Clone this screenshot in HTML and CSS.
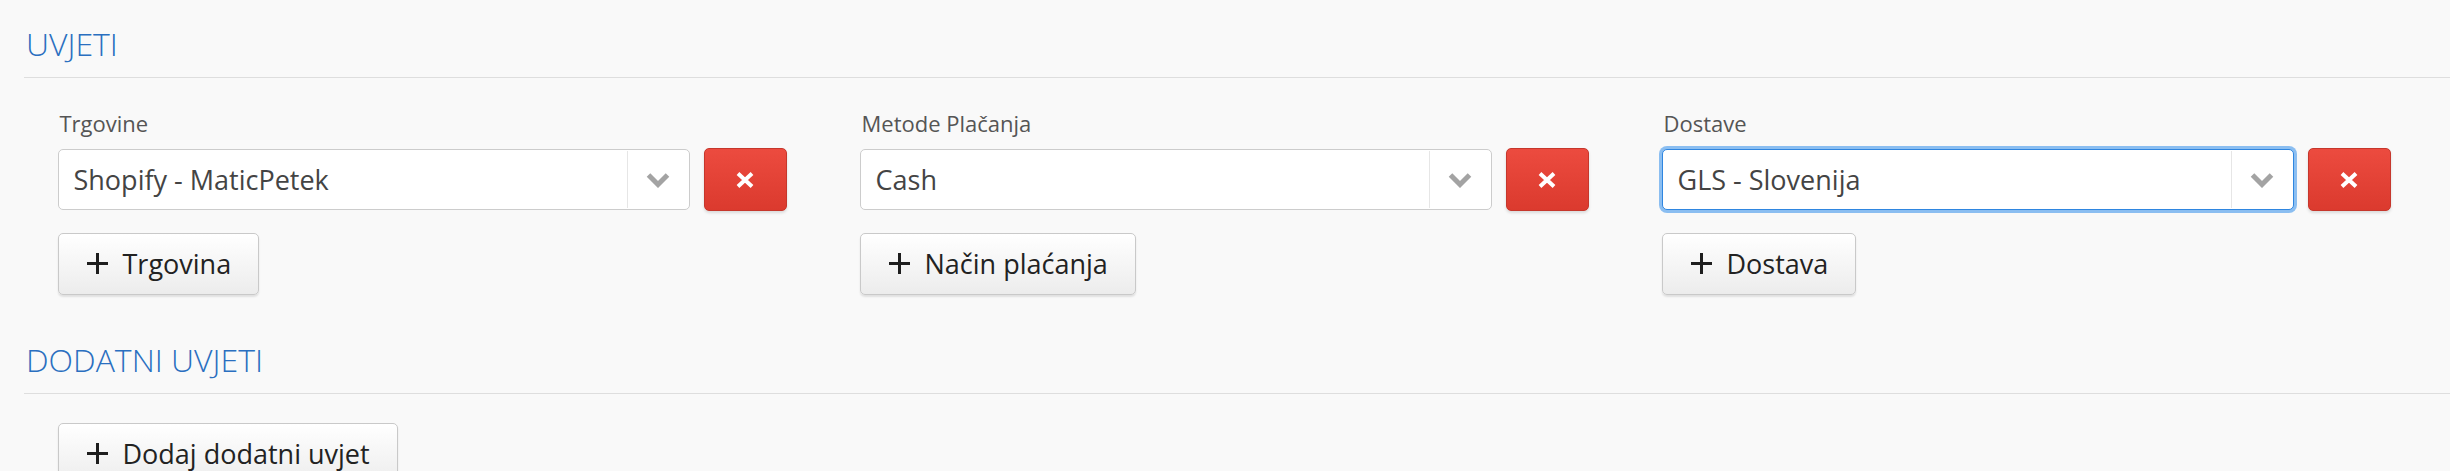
FILE: index.html
```html
<!DOCTYPE html>
<html lang="sl">
<head>
<meta charset="utf-8">
<title>Uvjeti</title>
<link rel="stylesheet" href="styles.css">
</head>
<body>
<div class="page">
  <h2 class="section-title">UVJETI</h2>
  <div class="conditions">
    <div class="field">
      <label class="field-label">Trgovine</label>
      <div class="select-row">
        <div class="select">
          <span class="select-value">Shopify - MaticPetek</span>
          <span class="select-arrow"><svg width="24" height="16" viewBox="0 0 24 16"><polyline points="2.5,3 12,12.5 21.5,3" fill="none" stroke="#a3a3a3" stroke-width="5"/></svg></span>
        </div>
        <button class="btn-remove" type="button"><svg width="20" height="16" viewBox="0 0 20 16"><path d="M3 1.5 L17 14.5 M17 1.5 L3 14.5" stroke="#fff" stroke-width="4"/></svg></button>
      </div>
      <button class="btn-add" type="button"><svg class="plus" width="21" height="21" viewBox="0 0 21 21"><path d="M10.5 0 V21 M0 10.5 H21" stroke="#1e1e1e" stroke-width="3"/></svg><span>Trgovina</span></button>
    </div>
    <div class="field">
      <label class="field-label">Metode Plačanja</label>
      <div class="select-row">
        <div class="select">
          <span class="select-value">Cash</span>
          <span class="select-arrow"><svg width="24" height="16" viewBox="0 0 24 16"><polyline points="2.5,3 12,12.5 21.5,3" fill="none" stroke="#a3a3a3" stroke-width="5"/></svg></span>
        </div>
        <button class="btn-remove" type="button"><svg width="20" height="16" viewBox="0 0 20 16"><path d="M3 1.5 L17 14.5 M17 1.5 L3 14.5" stroke="#fff" stroke-width="4"/></svg></button>
      </div>
      <button class="btn-add" type="button"><svg class="plus" width="21" height="21" viewBox="0 0 21 21"><path d="M10.5 0 V21 M0 10.5 H21" stroke="#1e1e1e" stroke-width="3"/></svg><span>Način plaćanja</span></button>
    </div>
    <div class="field">
      <label class="field-label">Dostave</label>
      <div class="select-row">
        <div class="select is-focused">
          <span class="select-value">GLS - Slovenija</span>
          <span class="select-arrow"><svg width="24" height="16" viewBox="0 0 24 16"><polyline points="2.5,3 12,12.5 21.5,3" fill="none" stroke="#a3a3a3" stroke-width="5"/></svg></span>
        </div>
        <button class="btn-remove" type="button"><svg width="20" height="16" viewBox="0 0 20 16"><path d="M3 1.5 L17 14.5 M17 1.5 L3 14.5" stroke="#fff" stroke-width="4"/></svg></button>
      </div>
      <button class="btn-add" type="button"><svg class="plus" width="21" height="21" viewBox="0 0 21 21"><path d="M10.5 0 V21 M0 10.5 H21" stroke="#1e1e1e" stroke-width="3"/></svg><span>Dostava</span></button>
    </div>
  </div>
  <h2 class="section-title second">DODATNI UVJETI</h2>
  <div class="extra">
    <button class="btn-add" type="button"><svg class="plus" width="21" height="21" viewBox="0 0 21 21"><path d="M10.5 0 V21 M0 10.5 H21" stroke="#1e1e1e" stroke-width="3"/></svg><span>Dodaj dodatni uvjet</span></button>
  </div>
</div>
</body>
</html>
```

FILE: styles.css
```css
html, body {
  margin: 0;
  padding: 0;
  background: #f9f9f9;
  font-family: "Open Sans", "Noto Sans", "Liberation Sans", sans-serif;
  overflow: hidden;
}

.page {
  padding-left: 24px;
}

.section-title {
  margin: 27px 0 0 0;
  padding: 0 0 16px 2px;
  font-size: 32px;
  line-height: 34px;
  font-weight: 300;
  color: #2a6fc0;
  border-bottom: 1px solid #dedede;
}

.section-title.second {
  margin-top: 48px;
}

.conditions {
  display: grid;
  grid-template-columns: repeat(3, 802px);
  padding-left: 33.5px;
  padding-top: 29px;
}

.field {
  display: flex;
  flex-direction: column;
  align-items: flex-start;
}

.field-label {
  display: block;
  font-size: 22px;
  line-height: 32px;
  color: #555;
  padding-left: 2px;
  margin-bottom: 9px;
}

.select-row {
  display: flex;
  align-items: center;
  gap: 14px;
}

.select {
  box-sizing: border-box;
  width: 632px;
  height: 61px;
  display: flex;
  align-items: stretch;
  background: #fff;
  border: 1px solid #ccc;
  border-radius: 5px;
}

.select.is-focused {
  border-color: #2f86e0;
  box-shadow: 0 0 0 3px rgba(120, 180, 240, 0.85);
}

.select-value {
  flex: 1;
  padding-left: 15px;
  font-size: 27px;
  line-height: 59px;
  color: #444;
}

.select-arrow {
  width: 61px;
  border-left: 1px solid #e6e6e6;
  display: flex;
  align-items: center;
  justify-content: center;
  margin: 1px 0;
}

.btn-remove {
  box-sizing: border-box;
  width: 83px;
  height: 63px;
  padding: 0;
  display: flex;
  align-items: center;
  justify-content: center;
  background: linear-gradient(#ec4b3f, #db3a2e);
  border: 1px solid #c6372c;
  border-radius: 5px;
  box-shadow: 0 2px 3px rgba(0, 0, 0, 0.12);
}

.btn-add {
  box-sizing: border-box;
  height: 62px;
  margin-top: 21.5px;
  padding: 0 27px 0 28px;
  display: flex;
  align-items: center;
  gap: 15px;
  font-family: inherit;
  font-size: 27px;
  color: #222;
  background: linear-gradient(#ffffff, #ececec);
  border: 1px solid #c9c9c9;
  border-radius: 5px;
  box-shadow: 0 2px 2px rgba(0, 0, 0, 0.1);
}

.plus {
  flex: none;
}

.extra {
  padding-left: 33.5px;
  padding-top: 7.5px;
}
```
